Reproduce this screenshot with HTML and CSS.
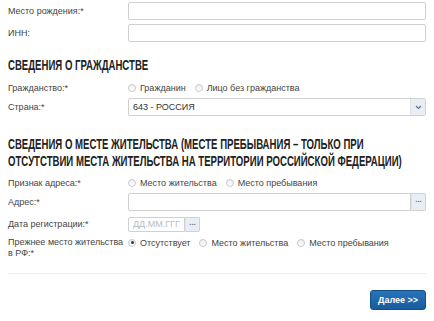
FILE: index.html
```html
<!DOCTYPE html>
<html lang="ru">
<head>
    <meta charset="UTF-8">
    <title>Сведения о заявителе</title>
    <link rel="stylesheet" href="styles.css">
</head>
<body>
    <form class="form">
        <div class="row">
            <label class="label">Место рождения:*</label>
            <div class="field"><input type="text" class="input"></div>
        </div>
        <div class="row">
            <label class="label">ИНН:</label>
            <div class="field"><input type="text" class="input"></div>
        </div>

        <h2 class="section-title">Сведения о гражданстве</h2>

        <div class="row row-radio">
            <label class="label">Гражданство:*</label>
            <div class="field radios">
                <span class="radio"><i class="dot"></i>Гражданин</span>
                <span class="radio"><i class="dot"></i>Лицо без гражданства</span>
            </div>
        </div>
        <div class="row">
            <label class="label">Страна:*</label>
            <div class="field">
                <div class="select">
                    <span class="select-value">643 - РОССИЯ</span>
                    <span class="select-btn">
                        <svg width="7" height="5" viewBox="0 0 7 5"><path d="M1 1l2.5 2.5L6 1" fill="none" stroke="#5a7590" stroke-width="1.2"/></svg>
                    </span>
                </div>
            </div>
        </div>

        <h2 class="section-title section-title-long">Сведения о месте жительства (месте пребывания – только при отсутствии места жительства на территории Российской Федерации)</h2>

        <div class="row row-radio">
            <label class="label">Признак адреса:*</label>
            <div class="field radios">
                <span class="radio"><i class="dot"></i>Место жительства</span>
                <span class="radio"><i class="dot"></i>Место пребывания</span>
            </div>
        </div>
        <div class="row">
            <label class="label">Адрес:*</label>
            <div class="field">
                <div class="input-group">
                    <input type="text" class="input">
                    <span class="addon">...</span>
                </div>
            </div>
        </div>
        <div class="row">
            <label class="label">Дата регистрации:*</label>
            <div class="field">
                <div class="input-group date-group">
                    <input type="text" class="input" placeholder="ДД.ММ.ГГГ">
                    <span class="addon">...</span>
                </div>
            </div>
        </div>
        <div class="row row-radio row-tall">
            <label class="label">Прежнее место жительства в РФ:*</label>
            <div class="field radios">
                <span class="radio"><i class="dot checked"></i>Отсутствует</span>
                <span class="radio"><i class="dot"></i>Место жительства</span>
                <span class="radio"><i class="dot"></i>Место пребывания</span>
            </div>
        </div>

        <div class="actions">
            <button type="button" class="btn-next">Далее &gt;&gt;</button>
        </div>
    </form>
</body>
</html>
```
FILE: styles.css
```css
/* Base */
body {
    margin: 0;
    background: #fff;
    font-family: "Liberation Sans", Arial, sans-serif;
    font-size: 9px;
    color: #444;
    overflow: hidden;
}

.form {
    width: 418px;
    padding: 2px 8px 0 8px;
}

/* Rows */
.row {
    display: flex;
    align-items: center;
    min-height: 18px;
    margin-bottom: 4px;
}

.label {
    width: 116px;
    padding-right: 4px;
    flex-shrink: 0;
    line-height: 11px;
}

.field {
    flex: 1;
}

.row-radio {
    min-height: 12px;
}

.row-tall {
    align-items: flex-start;
    margin-bottom: 0;
}

.row-tall .radios {
    height: 11px;
}

/* Inputs */
.input {
    display: block;
    box-sizing: border-box;
    width: 100%;
    height: 18px;
    margin: 0;
    padding: 0 5px;
    border: 1px solid #d0d0d0;
    border-radius: 2px;
    font-family: inherit;
    font-size: 9px;
    color: #333;
    outline: none;
}

.input::placeholder {
    color: #b3bcc6;
}

.input-group {
    display: flex;
}

.input-group .input {
    border-radius: 2px 0 0 2px;
}

.addon {
    flex-shrink: 0;
    width: 15px;
    height: 18px;
    box-sizing: border-box;
    border: 1px solid #d0d0d0;
    border-left: 1px solid #dde3ea;
    border-radius: 0 2px 2px 0;
    background: #e9eef4;
    color: #5a7590;
    font-size: 8px;
    font-weight: bold;
    text-align: center;
    line-height: 12px;
}

.date-group {
    width: 72px;
}

.date-group .input,
.date-group .addon {
    height: 15px;
}

.date-group .addon {
    line-height: 10px;
}

.date-group .input {
    padding: 0 4px;
}

/* Select */
.select {
    display: flex;
    height: 18px;
    box-sizing: border-box;
    border: 1px solid #d0d0d0;
    border-radius: 2px;
}

.select-value {
    flex: 1;
    padding-left: 4px;
    line-height: 16px;
    color: #333;
}

.select-btn {
    width: 14px;
    display: flex;
    align-items: center;
    justify-content: center;
    background: #e9eef4;
    border-left: 1px solid #dde3ea;
}

/* Radios */
.radios {
    display: flex;
    align-items: center;
    gap: 9px;
}

.radio {
    display: inline-flex;
    align-items: center;
    color: #444;
}

.dot {
    width: 8px;
    height: 8px;
    box-sizing: border-box;
    margin-right: 4px;
    border: 1px solid #c8c8c8;
    border-radius: 50%;
    background: linear-gradient(#eeeeee, #fff);
    position: relative;
}

.dot.checked::after {
    content: "";
    position: absolute;
    left: 1.5px;
    top: 1.5px;
    width: 3px;
    height: 3px;
    border-radius: 50%;
    background: #333;
}

/* Section titles: narrow grotesque, squeezed horizontally */
.section-title {
    width: 660px;
    margin: 14px 0 9px 0;
    font-family: "Liberation Sans", Arial, sans-serif;
    font-size: 15px;
    line-height: 17px;
    font-weight: bold;
    text-transform: uppercase;
    color: #222;
    transform: scaleX(0.64);
    transform-origin: left top;
}

.section-title-long {
    margin: 19px 0 8px 0;
}

/* Actions */
.actions {
    margin-top: 14px;
    padding-top: 16px;
    border-top: 1px solid #ededed;
    display: flex;
    justify-content: flex-end;
}

.btn-next {
    width: 56px;
    height: 20px;
    border: 1px solid #0f4f8c;
    border-radius: 3px;
    background: linear-gradient(#2a72b8, #165c9e);
    color: #fff;
    font-family: inherit;
    font-size: 9px;
    font-weight: bold;
    cursor: pointer;
}
```
